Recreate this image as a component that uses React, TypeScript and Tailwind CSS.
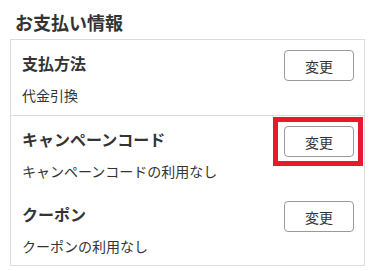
import React from "react";

function ChangeButton({ highlighted }: { highlighted?: boolean }) {
  return (
    <div className="relative shrink-0">
      <button
        type="button"
        className="flex h-[31px] w-[70px] items-center justify-center rounded-[4px] border border-[#9a9a9a] bg-white text-[14px] leading-none text-[#333]"
      >
        変更
      </button>
      {highlighted && (
        <div className="pointer-events-none absolute left-[-11px] top-[-9px] h-[49px] w-[90px] border-[5px] border-[#e8192c]" />
      )}
    </div>
  );
}

function Section({
  title,
  detail,
  highlighted,
  className,
}: {
  title: string;
  detail: string;
  highlighted?: boolean;
  className: string;
}) {
  return (
    <div className={className}>
      <div className="flex items-start justify-between">
        <div className="mt-[1px] text-[16px] font-bold leading-[24px]">{title}</div>
        <ChangeButton highlighted={highlighted} />
      </div>
      <div className="mt-[3px] text-[14px] leading-[22px]">{detail}</div>
    </div>
  );
}

export default function App() {
  return (
    <div className="h-[271px] w-[374px] overflow-hidden bg-white font-['Noto_Sans_CJK_JP','Noto_Sans',sans-serif] text-[#333]">
      <h2 className="pl-[15px] pt-[9px] text-[18px] font-bold leading-[27px]">お支払い情報</h2>
      <div className="ml-[10px] mt-[3px] w-[355px] border border-[#dcdcdc]">
        <Section
          title="支払方法"
          detail="代金引換"
          className="border-b border-[#dcdcdc] pb-[9px] pl-[11px] pr-[10px] pt-[10px]"
        />
        <Section
          title="キャンペーンコード"
          detail="キャンペーンコードの利用なし"
          highlighted
          className="pb-[9px] pl-[11px] pr-[10px] pt-[10px]"
        />
        <Section
          title="クーポン"
          detail="クーポンの利用なし"
          className="pb-[8px] pl-[11px] pr-[10px] pt-[10px]"
        />
      </div>
    </div>
  );
}
